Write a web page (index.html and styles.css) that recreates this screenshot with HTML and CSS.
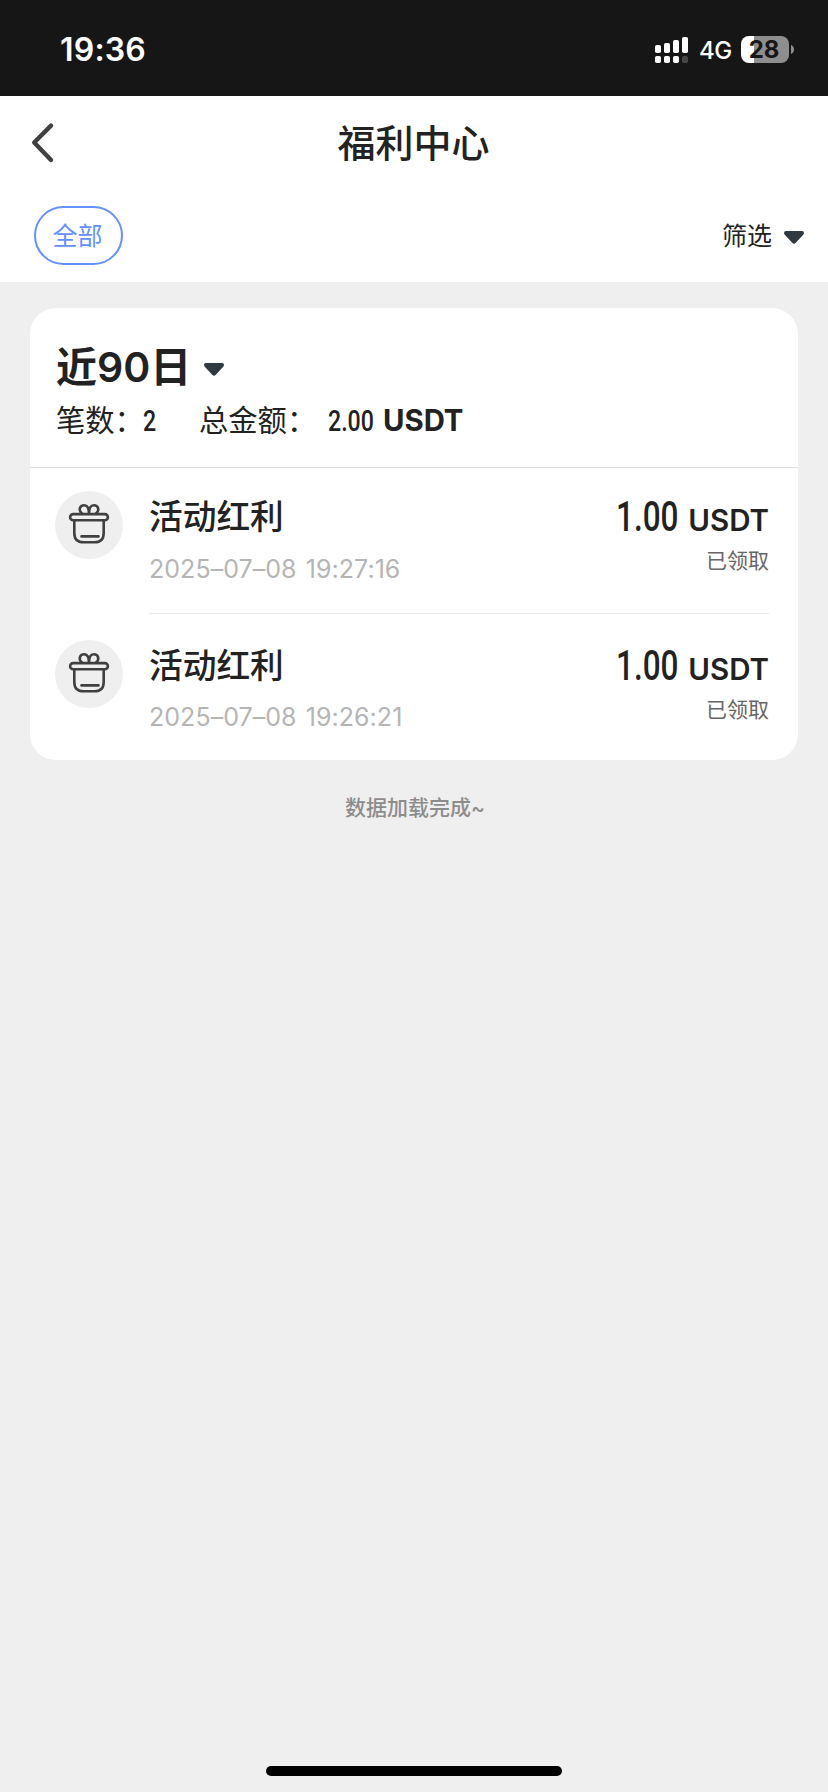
FILE: index.html
```html
<!DOCTYPE html>
<html lang="zh-CN">
<head>
<meta charset="utf-8">
<title>福利中心</title>
<link rel="stylesheet" href="styles.css">
</head>
<body>
<div class="screen">
  <header class="status-bar">
    <span class="clock">19:36</span>
    <svg class="signal" width="34" height="27" viewBox="0 0 34 27" fill="#fff">
      <rect x="0" y="9" width="6" height="8" rx="1.8"/><rect x="9" y="7" width="6" height="10" rx="1.8"/><rect x="18" y="4" width="6" height="13" rx="1.8"/><rect x="27" y="1" width="6" height="16" rx="1.8"/>
      <rect x="0" y="20" width="6" height="7" rx="1.8"/><rect x="9" y="20" width="6" height="7" rx="1.8"/><rect x="18" y="20" width="6" height="7" rx="1.8"/><rect x="27" y="20" width="6" height="7" rx="1.8" fill="#464646"/>
    </svg>
    <span class="network">4G</span>
    <span class="battery">28</span>
    <svg class="nub" width="3" height="9" viewBox="0 0 3 9"><path d="M0 0C4 1.5 4 7.5 0 9Z" fill="#8e8e8e"/></svg>
  </header>

  <nav class="title-bar">
    <svg class="back" width="24" height="42" viewBox="0 0 24 42" fill="none" stroke="#404040" stroke-width="4.4" stroke-linecap="round" stroke-linejoin="round"><path d="M20 3.6L3.2 20.5L20 38"/></svg>
    <h1 class="page-title">福利中心</h1>
  </nav>

  <div class="filters">
    <span class="pill">全部</span>
    <span class="filter">筛选<svg class="caret" width="20" height="13" viewBox="0 0 20 13"><path d="M2 0H18Q20 0 20 2Q20 3 19 4L11.8 11.8Q10 13.5 8.2 11.8L1 4Q0 3 0 2Q0 0 2 0Z" fill="#303840"/></svg></span>
  </div>

  <main class="card">
    <section class="summary">
      <h2 class="period">近90日<svg class="caret" width="20" height="13" viewBox="0 0 20 13"><path d="M2 0H18Q20 0 20 2Q20 3 19 4L11.8 11.8Q10 13.5 8.2 11.8L1 4Q0 3 0 2Q0 0 2 0Z" fill="#303840"/></svg></h2>
      <p class="totals"><span class="count-label">笔数：</span><span class="count"><span class="narrow">2</span></span><span class="sum-label">总金额：</span><span class="sum"><span class="narrow">2.00</span></span><b class="unit">USDT</b></p>
    </section>

    <article class="row">
      <span class="icon"><svg width="42" height="42" viewBox="0 0 42 42" fill="none" stroke="#404040" stroke-width="2.6" stroke-linecap="round" stroke-linejoin="round"><rect x="2.1" y="11.1" width="37.8" height="6.2" rx="3.1"/><path d="M6.3 17.5V30Q6.3 39.3 15.6 39.3H26.4Q35.7 39.3 35.7 30V17.5M13.5 33.4H30.5M14 10.6C9.8 7 12 2.3 16 2.3C19.6 2.3 21 5 21 10.6C21 5 22.4 2.3 26 2.3C30 2.3 32.2 7 28 10.6"/></svg></span>
      <div class="detail">
        <div class="info"><h3 class="name">活动红利</h3><time class="time">2025–07–08 19:27:16</time></div>
        <div class="value"><p class="amount"><span class="figure"><span class="narrow">1.00</span></span><span class="coin">USDT</span></p><p class="state">已领取</p></div>
      </div>
    </article>
    <article class="row">
      <span class="icon"><svg width="42" height="42" viewBox="0 0 42 42" fill="none" stroke="#404040" stroke-width="2.6" stroke-linecap="round" stroke-linejoin="round"><rect x="2.1" y="11.1" width="37.8" height="6.2" rx="3.1"/><path d="M6.3 17.5V30Q6.3 39.3 15.6 39.3H26.4Q35.7 39.3 35.7 30V17.5M13.5 33.4H30.5M14 10.6C9.8 7 12 2.3 16 2.3C19.6 2.3 21 5 21 10.6C21 5 22.4 2.3 26 2.3C30 2.3 32.2 7 28 10.6"/></svg></span>
      <div class="detail">
        <div class="info"><h3 class="name">活动红利</h3><time class="time">2025–07–08 19:26:21</time></div>
        <div class="value"><p class="amount"><span class="figure"><span class="narrow">1.00</span></span><span class="coin">USDT</span></p><p class="state">已领取</p></div>
      </div>
    </article>
  </main>

  <p class="done">数据加载完成~</p>
  <div class="home-bar"></div>
</div>
</body>
</html>
```

FILE: styles.css
```css
* { box-sizing: border-box; margin: 0; padding: 0; }
body { background: #efefef; color: #222; font-family: Inter, "Noto Sans CJK SC", sans-serif; }
svg { display: block; flex: none; }
h1, h2, h3 { font-weight: 500; }
.screen { width: 828px; height: 1792px; display: flex; flex-direction: column; overflow: hidden; white-space: nowrap; }

.status-bar { height: 96px; flex: none; background: #161616; color: #fff; display: flex; align-items: center; padding: 3px 34px 0 60px; }
.clock { font-size: 32px; font-weight: 600; line-height: 40px; margin: 1px auto 0 0; letter-spacing: .2px; }
.network { font-size: 24px; font-weight: 500; line-height: 30px; width: 32px; margin: 2px 10px 0 10px; letter-spacing: -.6px; }
.battery { width: 48px; height: 27px; border-radius: 8px; background: linear-gradient(90deg, #fff 13px, #8e8e8e 13px); color: #161616; font-size: 24px; font-weight: 700; line-height: 27px; text-align: center; padding-right: 2px; }
.nub { margin-left: 2px; }

.title-bar { height: 94px; flex: none; background: #fff; display: flex; align-items: center; padding: 0 31px 0 31px; }
.page-title { flex: 1; text-align: center; font-size: 38px; line-height: 50px; padding-right: 25px; }

.filters { height: 92px; flex: none; background: #fff; display: flex; align-items: center; justify-content: space-between; padding: 0 24px 0 34px; }
.pill { width: 89px; height: 59px; border: 2px solid #6590ff; border-radius: 30px; color: #6590ff; font-size: 25px; line-height: 56px; padding-right: 2px; text-align: center; margin-top: -1px; }
.filter { display: flex; align-items: center; gap: 12px; font-size: 25px; line-height: 40px; }
.filter .caret { margin-top: 3px; }

.card { width: 768px; height: 452px; flex: none; margin: 26px 0 0 30px; background: #fff; border-radius: 26px; }
.summary { height: 160px; border-bottom: 1px solid #ddd; padding: 34px 26px 0; }
.period { display: flex; align-items: center; gap: 13px; font-size: 41px; font-weight: 600; line-height: 50px; }
.period .caret { margin-top: 5px; }
.totals { display: flex; font-size: 29.3px; line-height: 40px; margin-top: 9px; }
.narrow { display: inline-block; font-family: Roboto, sans-serif; font-weight: 500; transform-origin: 0 50%; }
.count-label { width: 87px; }
.count { width: 56px; }
.sum-label { width: 129px; }
.sum { width: 55px; }
.count .narrow, .sum .narrow { transform: scaleX(.79); }
.unit { font-weight: 700; }

.row { height: 149px; display: flex; padding: 23px 29px 0 25px; gap: 26px; }
.row:last-child { height: 142px; }
.icon { width: 68px; height: 68px; flex: none; border-radius: 50%; background: #efefef; display: flex; align-items: center; justify-content: center; }
.icon svg { margin-top: -2px; }
.detail { flex: 1; display: flex; justify-content: space-between; height: 123px; border-bottom: 1px solid #ebebeb; }
.row:last-child .detail { border-bottom: 0; }
.name { font-size: 33.7px; line-height: 44px; margin-top: 4px; }
.time { display: block; font-size: 25px; line-height: 32px; margin-top: 14px; color: #b5b5b5; letter-spacing: .05px; word-spacing: 2px; }
.row:last-child .time { margin-top: 13px; }
.amount { display: flex; align-items: baseline; line-height: 44px; margin-top: 3px; }
.figure { width: 72px; font-size: 42px; }
.figure .narrow { transform: scaleX(.75); }
.coin { font-size: 29.5px; font-weight: 600; }
.state { font-size: 21px; line-height: 28px; margin-top: 5px; text-align: right; color: #666; font-weight: 400; }

.done { text-align: center; font-size: 21px; line-height: 30px; margin-top: 33px; padding-left: 2px; color: #8c8c8c; font-weight: 500; }
.home-bar { width: 296px; height: 10px; flex: none; border-radius: 5px; background: #000; margin: auto auto 16px; }
```
